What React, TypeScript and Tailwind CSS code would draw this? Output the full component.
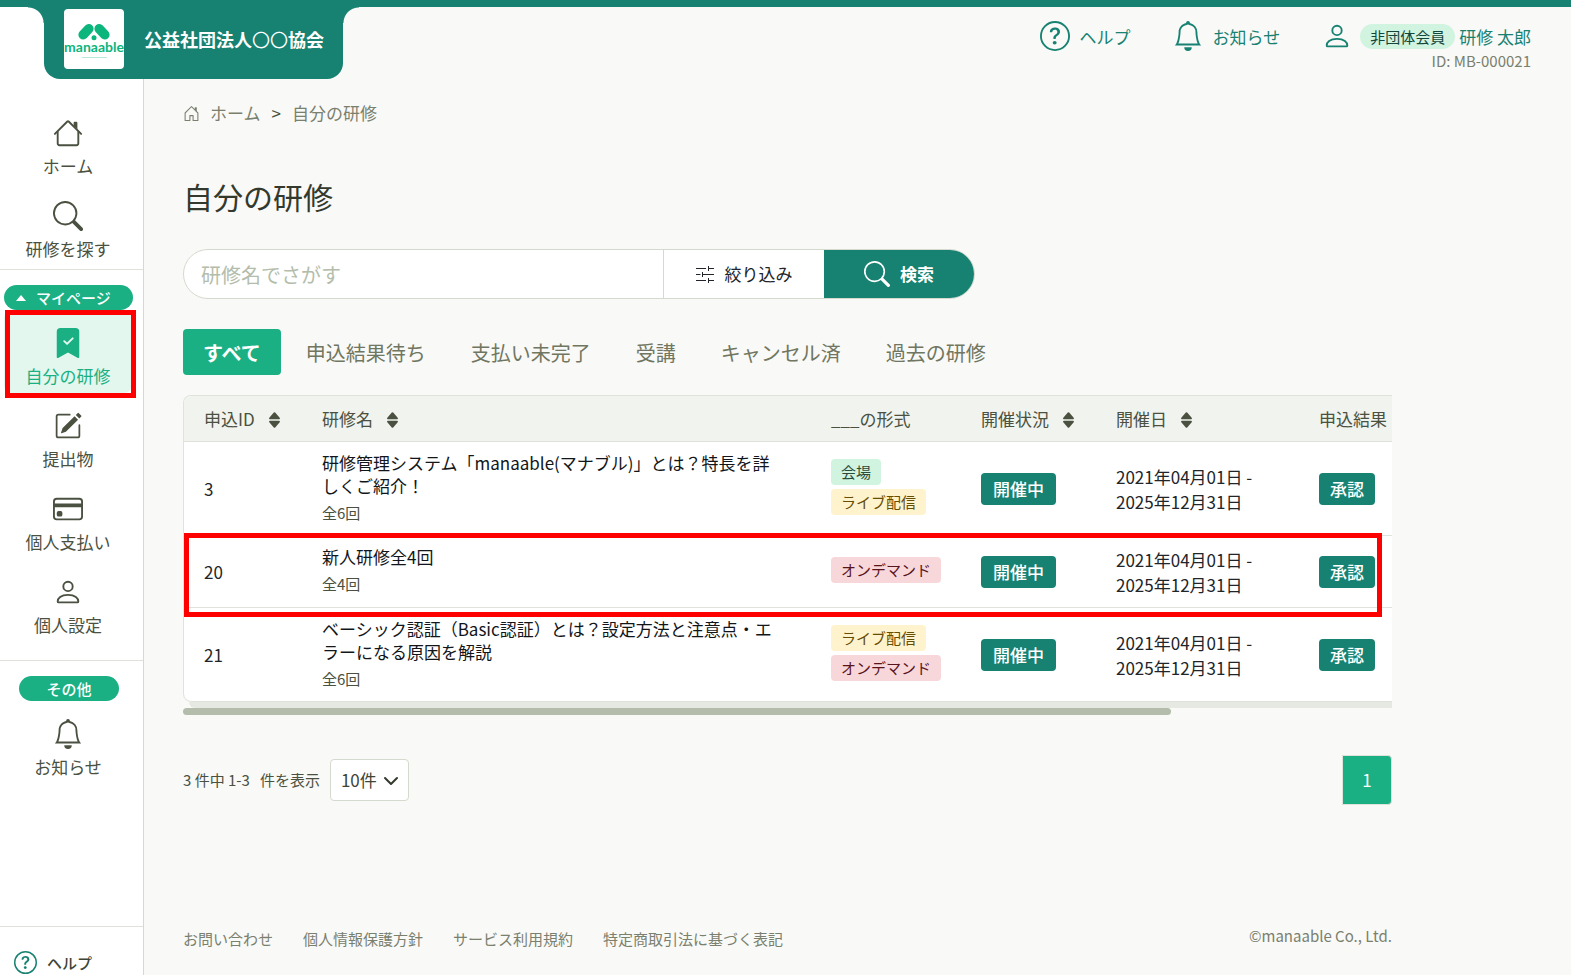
import React, { useState } from "react";
import type { ReactNode } from "react";
import {
  BsBookmarkCheckFill,
  BsCaretDownFill,
  BsCaretUpFill,
  BsCreditCard,
  BsQuestionCircle,
  BsSearch,
} from "react-icons/bs";

type IconProps = { className?: string };

const HouseIcon = ({ className }: IconProps) => (
  <svg viewBox="0 0 16 16" fill="currentColor" className={className} aria-hidden="true">
    <path d="M2 13.5V7h1v6.5a.5.5 0 0 0 .5.5h9a.5.5 0 0 0 .5-.5V7h1v6.5a1.5 1.5 0 0 1-1.5 1.5h-9A1.5 1.5 0 0 1 2 13.5zm11-11V6l-2-2V2.5a.5.5 0 0 1 .5-.5h1a.5.5 0 0 1 .5.5z" />
    <path d="M7.293 1.5a1 1 0 0 1 1.414 0l6.647 6.646a.5.5 0 0 1-.708.708L8 2.207 1.354 8.854a.5.5 0 1 1-.708-.708L7.293 1.5z" />
  </svg>
);

const HouseDoorIcon = ({ className }: IconProps) => (
  <svg viewBox="0 0 16 16" fill="currentColor" className={className} aria-hidden="true">
    <path d="M7.646 1.146a.5.5 0 0 1 .708 0l6 6a.5.5 0 0 1 .146.354v7a.5.5 0 0 1-.5.5H9.5a.5.5 0 0 1-.5-.5v-4H7v4a.5.5 0 0 1-.5.5H2a.5.5 0 0 1-.5-.5v-7a.5.5 0 0 1 .146-.354l6-6zM2.5 7.707V14H6v-4a.5.5 0 0 1 .5-.5h3a.5.5 0 0 1 .5.5v4h3.5V7.707L8 2.207l-5.5 5.5z" />
    <path d="M13 2.5V6l-2-2V2.5a.5.5 0 0 1 .5-.5h1a.5.5 0 0 1 .5.5z" />
  </svg>
);

const BellIcon = ({ className }: IconProps) => (
  <svg viewBox="0 0 16 16" fill="currentColor" className={className} aria-hidden="true">
    <path d="M8 16a2 2 0 0 0 2-2H6a2 2 0 0 0 2 2z" />
    <path d="M8 1.918l-.797.161A4.002 4.002 0 0 0 4 6c0 .628-.134 2.197-.459 3.742-.16.767-.376 1.566-.663 2.258h10.244c-.287-.692-.502-1.49-.663-2.258C12.134 8.197 12 6.628 12 6a4.002 4.002 0 0 0-3.203-3.92L8 1.917zM14.22 12c.223.447.481.801.78 1H1c.299-.199.557-.553.78-1C2.68 10.2 3 6.88 3 6c0-2.42 1.72-4.44 4.005-4.901a1 1 0 1 1 1.99 0A5.002 5.002 0 0 1 13 6c0 .88.32 4.2 1.22 6z" />
  </svg>
);

const PersonIcon = ({ className }: IconProps) => (
  <svg viewBox="0 0 16 16" fill="none" stroke="currentColor" className={className} aria-hidden="true">
    <circle cx="8" cy="5" r="2.5" />
    <path d="M3 13.5h10c.3 0 .5-.2.5-.5 0-1.6-1.6-3.5-5.5-3.5s-5.5 1.9-5.5 3.5c0 .3.2.5.5.5z" />
  </svg>
);

const PencilIcon = ({ className }: IconProps) => (
  <svg viewBox="0 0 16 16" fill="currentColor" className={className} aria-hidden="true">
    <path d="M15.502 1.94a.5.5 0 0 1 0 .706L14.459 3.69l-2-2L13.502.646a.5.5 0 0 1 .707 0l1.293 1.293zm-1.75 2.456l-2-2L4.939 9.21a.5.5 0 0 0-.121.196l-.805 2.414a.25.25 0 0 0 .316.316l2.414-.805a.5.5 0 0 0 .196-.12l6.813-6.814z" />
    <path d="M1 13.5A1.5 1.5 0 0 0 2.5 15h11a1.5 1.5 0 0 0 1.5-1.5v-6a.5.5 0 0 0-1 0v6a.5.5 0 0 1-.5.5h-11a.5.5 0 0 1-.5-.5v-11a.5.5 0 0 1 .5-.5H9a.5.5 0 0 0 0-1H2.5A1.5 1.5 0 0 0 1 2.5v11z" />
  </svg>
);

const TuneIcon = ({ className }: IconProps) => (
  <svg viewBox="0 0 18 18" fill="none" stroke="currentColor" className={className} aria-hidden="true">
    <path d="M0 3.5h10M12.5 3.5H18M12.5 1v5M0 9.5h4.5M6.5 9.5H18M6.5 7v5M0 15.5h10M12.5 15.5H18M12.5 13v5" />
  </svg>
);

const Logo = () => (
  <div className="flex size-[60px] shrink-0 flex-col items-center rounded bg-white pt-3.5 text-[#0cb57c]">
    <svg viewBox="0 0 32 18" className="h-[18px] w-8" fill="currentColor" aria-hidden="true">
      <path
        d="M5.2 11.8 10.8 5.8M26.8 11.8 21.2 5.8"
        stroke="currentColor"
        strokeWidth="9.6"
        strokeLinecap="round"
      />
      <circle cx="16" cy="14.8" r="3.4" fill="#fff" />
      <circle cx="16" cy="14.8" r="2.5" />
    </svg>
    <span className="font-[Lato] text-[14px] leading-3 font-bold">manaable</span>
    <span className="mt-1 h-px w-[25px] bg-[#0cb57c]/30" />
  </div>
);

const SortIcon = () => (
  <span className="ml-3 inline-flex flex-col pt-0.5 text-[15px]">
    <BsCaretUpFill className="-mb-1.5" />
    <BsCaretDownFill />
  </span>
);

type NavItemProps = { icon: ReactNode; label: string; active?: boolean };

const NavItem = ({ icon, label, active }: NavItemProps) => (
  <a
    href="#"
    className={
      active
        ? "relative mr-[11px] ml-1 flex h-[83px] flex-col items-center rounded-lg bg-[#e3f7ee] pt-[18px] text-[#1bb083]"
        : "flex h-[83px] flex-col items-center pt-[18px] pr-[7px] text-[#4a5140]"
    }
  >
    <span className="flex h-[30px] items-center">{icon}</span>
    <span className="mt-1 text-[17px] leading-7">{label}</span>
    {active && (
      <span className="pointer-events-none absolute top-0 -right-1 -bottom-[5px] left-px border-5 border-[#ff0000]" />
    )}
  </a>
);

const formatStyles = {
  会場: "bg-[#d1f4e0] text-[#2b4a3b]",
  ライブ配信: "bg-[#fff3cd] text-[#664d03]",
  オンデマンド: "bg-[#f8d7da] text-[#58151c]",
};

type Format = keyof typeof formatStyles;

const courses: { id: number; name: string; count: string; formats: Format[] }[] = [
  {
    id: 3,
    name: "研修管理システム「manaable(マナブル)」とは？特長を詳しくご紹介！",
    count: "全6回",
    formats: ["会場", "ライブ配信"],
  },
  { id: 20, name: "新人研修全4回", count: "全4回", formats: ["オンデマンド"] },
  {
    id: 21,
    name: "ベーシック認証（Basic認証）とは？設定方法と注意点・エラーになる原因を解説",
    count: "全6回",
    formats: ["ライブ配信", "オンデマンド"],
  },
];

const columns = [
  { label: "申込ID", width: "w-[118px]", sortable: true },
  { label: "研修名", width: "w-[509px]", sortable: true },
  { label: "___の形式", width: "w-[150px]", sortable: false },
  { label: "開催状況", width: "w-[135px]", sortable: true },
  { label: "開催日", width: "w-[203px]", sortable: true },
  { label: "申込結果", width: "w-[364px]", sortable: true },
];

const tabs = ["すべて", "申込結果待ち", "支払い未完了", "受講", "キャンセル済", "過去の研修"];
const footerLinks = ["お問い合わせ", "個人情報保護方針", "サービス利用規約", "特定商取引法に基づく表記"];

const Header = () => (
  <header className="relative z-10 flex h-[79px] border-t-7 border-[#178272]">
    <div className="w-11 bg-white" />
    <div className="relative -mt-1 flex h-[76px] w-[299px] items-center gap-5 rounded-b-2xl bg-[#178272] pb-1 pl-5">
      {/* Inverted corners where the tab meets the top bar */}
      <span className="absolute top-1 -left-4 size-4 bg-[radial-gradient(circle_at_0_100%,transparent_15px,#178272_16px)]" />
      <span className="absolute top-1 -right-4 size-4 bg-[radial-gradient(circle_at_100%_100%,transparent_15px,#178272_16px)]" />
      <Logo />
      <p className="text-[18px] leading-6 font-bold whitespace-nowrap text-white">
        公益社団法人<span className="font-normal">〇〇</span>協会
      </p>
    </div>
    <div className="flex flex-1 items-start justify-end pr-10 text-[17px] text-[#178272]">
      <a href="#" className="mt-3.5 flex items-center gap-2.5">
        <BsQuestionCircle className="size-[30px]" />
        <span className="pt-0.5">ヘルプ</span>
      </a>
      <a href="#" className="mt-3.5 ml-[42px] flex items-center gap-2.5">
        <BellIcon className="size-[30px]" />
        <span className="pt-0.5">お知らせ</span>
      </a>
      <PersonIcon className="mt-3.5 ml-[42px] size-[30px]" />
      <div className="mt-4 ml-2 flex flex-col items-end">
        <div className="flex items-center gap-1">
          <span className="mb-0.5 rounded-full bg-[#d1f4e0] px-2.5 text-[15px] leading-[25px] text-[#14453a]">
            非団体会員
          </span>
          <span className="leading-7">研修 太郎</span>
        </div>
        <span className="text-[15px] leading-5 text-[#7a806e]">ID: MB-000021</span>
      </div>
    </div>
  </header>
);

const Sidebar = () => (
  <aside className="-mt-[72px] flex w-36 shrink-0 flex-col border-r border-[#d5dace] bg-white pt-[72px]">
    <nav className="pt-[21px] pb-[3px]">
      <NavItem icon={<HouseIcon className="size-[30px]" />} label="ホーム" />
      <NavItem icon={<BsSearch className="size-[30px]" />} label="研修を探す" />
    </nav>
    <nav className="border-t border-[#dfe2db] pt-[15px] pb-[18px]">
      <button
        type="button"
        className="ml-1 flex h-[25px] w-[129px] items-center gap-2.5 rounded-full bg-[#1bb083] pl-3 text-[15px] font-medium text-white"
      >
        <span className="border-x-5 border-b-6 border-x-transparent border-b-white" />
        <span className="pt-0.5">マイページ</span>
      </button>
      <NavItem icon={<BsBookmarkCheckFill className="size-[30px]" />} label="自分の研修" active />
      <NavItem icon={<PencilIcon className="size-7" />} label="提出物" />
      <NavItem icon={<BsCreditCard className="size-[30px]" />} label="個人支払い" />
      <NavItem icon={<PersonIcon className="size-[30px]" />} label="個人設定" />
    </nav>
    <nav className="border-t border-[#dfe2db] pt-[15px]">
      <p className="ml-[19px] h-[25px] w-[100px] rounded-full bg-[#1bb083] text-center text-[15px] leading-[26px] font-medium text-white">
        その他
      </p>
      <NavItem icon={<BellIcon className="size-[30px]" />} label="お知らせ" />
    </nav>
    <a
      href="#"
      className="mt-auto flex h-[49px] items-start gap-2.5 border-t border-[#dfe2db] pt-6 pl-3.5 text-[15px] font-medium text-[#3e4436]"
    >
      <BsQuestionCircle className="size-[23px] shrink-0 text-[#178272]" />
      <span className="pt-px">ヘルプ</span>
    </a>
  </aside>
);

const SearchForm = () => (
  <form
    className="flex h-[50px] w-[792px] overflow-hidden rounded-full border border-[#d5dace] bg-white"
    onSubmit={(e) => e.preventDefault()}
  >
    <input
      type="text"
      aria-label="研修名でさがす"
      placeholder="研修名でさがす"
      className="min-w-0 flex-1 px-[17px] pt-0.5 text-[20px] outline-none placeholder:text-[#b4bdab]"
    />
    <button
      type="button"
      className="flex w-[161px] items-center justify-center gap-[11px] border-l border-[#d5dace] text-[17px] text-[#212529]"
    >
      <TuneIcon className="size-[18px]" />
      絞り込み
    </button>
    <button
      type="submit"
      className="flex w-[150px] items-center justify-center gap-2.5 bg-[#178272] text-[17px] font-bold text-white"
    >
      <BsSearch className="size-[26px]" />
      検索
    </button>
  </form>
);

const CourseTable = () => (
  <div className="relative mt-5">
    <div className="overflow-hidden">
      <table className="w-[1479px] table-fixed border-separate border-spacing-0 rounded-lg border border-b-0 border-[#dfe3db] bg-white text-left">
        <thead className="h-[46px] bg-[#f0f3ee] text-[17px] text-[#4a5140]">
          <tr>
            {columns.map((col) => (
              <th
                key={col.label}
                className={`${col.width} border-b border-[#dfe3db] py-0 pl-5 font-normal whitespace-nowrap first:rounded-tl-lg`}
              >
                <span className="flex items-center">
                  {col.label}
                  {col.sortable && <SortIcon />}
                </span>
              </th>
            ))}
          </tr>
        </thead>
        <tbody className="text-[17px] text-[#212529] [&_td]:border-b [&_td]:border-[#dfe3db] [&_td]:pl-5 [&>tr:last-child>td:first-child]:rounded-bl-lg">
          {courses.map((course) => (
            <tr key={course.id} className={course.formats.length > 1 ? "h-[94px]" : "h-[72px]"}>
              <td>{course.id}</td>
              <td className="pr-8 pb-0.5">
                <p className="leading-[23px] text-[#12161a]">{course.name}</p>
                <p className="mt-1 text-[15px] leading-6 text-[#4a5140]">{course.count}</p>
              </td>
              <td className="pb-1">
                <div className="flex flex-col items-start gap-1">
                  {course.formats.map((format) => (
                    <span
                      key={format}
                      className={`rounded px-2.5 text-[15px] leading-[26px] ${formatStyles[format]}`}
                    >
                      {format}
                    </span>
                  ))}
                </div>
              </td>
              <td>
                <span className="inline-block rounded bg-[#178272] px-3 leading-8 font-medium text-white">
                  開催中
                </span>
              </td>
              <td className="leading-[25px]">
                2021年04月01日 -<br />
                2025年12月31日
              </td>
              <td>
                <span className="inline-block rounded bg-[#178272] px-[11px] leading-8 font-medium text-white">
                  承認
                </span>
              </td>
            </tr>
          ))}
        </tbody>
      </table>
    </div>
    {/* Marker around the highlighted row */}
    <div className="pointer-events-none absolute top-[138px] right-[10px] left-px h-[84px] border-5 border-[#ff0000]" />
    <div className="ml-1.5 h-1.5 rounded-bl-md bg-[#e5e9e1]" />
    <div className="h-[7px] w-[988px] rounded-full bg-[#b4bdab]" />
  </div>
);

const App = () => {
  const [activeTab, setActiveTab] = useState(tabs[0]);

  return (
    <div
      lang="ja"
      className="flex h-screen flex-col overflow-hidden bg-[#f9f9f7] font-['Noto_Sans_CJK_JP',sans-serif] text-[#212529]"
    >
      <Header />
      <div className="flex min-h-0 flex-1">
        <Sidebar />
        <main className="flex min-w-0 flex-1 flex-col pt-5 pr-[179px] pl-[39px]">
          <div className="flex items-center text-[17px] leading-7 text-[#7a806e]">
            <HouseDoorIcon className="size-[17px]" />
            <a href="#" className="ml-2.5">
              ホーム
            </a>
            <span className="mx-[11px] text-[#4a5140]">&gt;</span>
            <span>自分の研修</span>
          </div>
          <h1 className="mt-[46px] mb-[30px] text-[30px] leading-[46px] font-normal text-[#34392d]">
            自分の研修
          </h1>
          <SearchForm />
          <div className="mt-[30px] flex gap-[5px]">
            {tabs.map((tab) => (
              <button
                key={tab}
                type="button"
                onClick={() => setActiveTab(tab)}
                className={
                  tab === activeTab
                    ? "h-[46px] rounded bg-[#1bb083] px-5 pt-0.5 text-[20px] font-bold text-white"
                    : "h-[46px] px-5 pt-0.5 text-[20px] text-[#70765f]"
                }
              >
                {tab}
              </button>
            ))}
          </div>
          <CourseTable />
          <div className="mt-10 flex items-center justify-between">
            <div className="flex items-center text-[15px] text-[#4a5140]">
              <span>3 件中 1-3</span>
              <span className="ml-2.5">件を表示</span>
              <div className="relative ml-2.5">
                <select
                  aria-label="表示件数"
                  className="h-[42px] w-[79px] appearance-none rounded border border-[#d5dace] bg-white pl-2.5 text-[17px] text-[#3e4436]"
                >
                  <option>10件</option>
                </select>
                <svg
                  viewBox="0 0 16 16"
                  fill="none"
                  stroke="#343a2c"
                  strokeWidth="2"
                  strokeLinecap="round"
                  strokeLinejoin="round"
                  className="pointer-events-none absolute top-3.5 right-2.5 size-4"
                  aria-hidden="true"
                >
                  <path d="m2 5 6 6 6-6" />
                </svg>
              </div>
            </div>
            <button
              type="button"
              className="size-[50px] rounded-r border border-[#dfe3db] bg-[#1bb083] text-[17px] text-white"
            >
              1
            </button>
          </div>
          <footer className="mt-auto flex items-center justify-between pb-[21px] text-[15px] leading-6 text-[#7a806e]">
            <div className="flex gap-[30px]">
              {footerLinks.map((link) => (
                <a key={link} href="#">
                  {link}
                </a>
              ))}
            </div>
            <span className="pb-1.5">©manaable Co., Ltd.</span>
          </footer>
        </main>
      </div>
    </div>
  );
};

export default App;
